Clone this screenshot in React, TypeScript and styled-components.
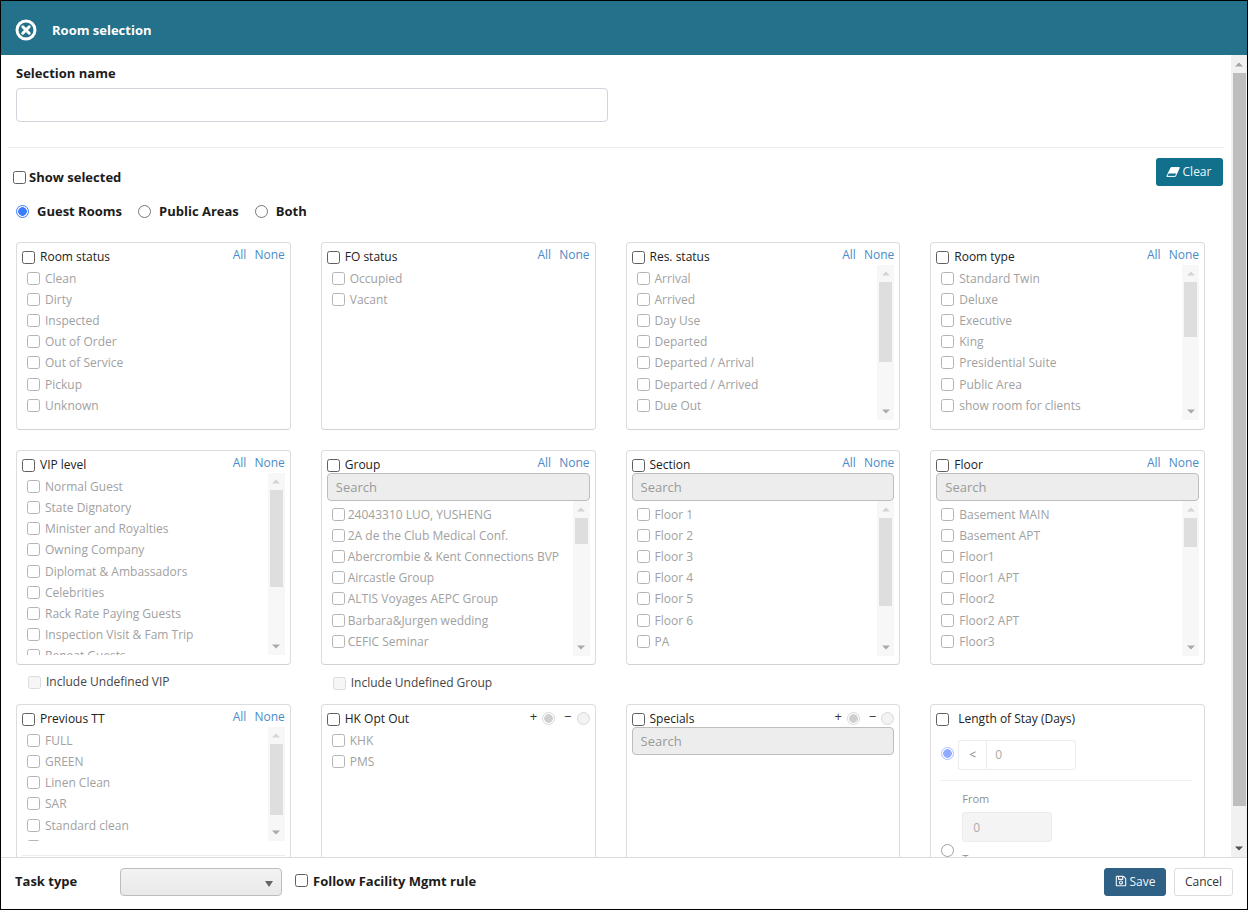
import React from 'react';
import styled, { createGlobalStyle } from 'styled-components';
import { FaRegSave } from 'react-icons/fa';

const GlobalStyle = createGlobalStyle`
  html, body { margin: 0; padding: 0; background: #fff; }
  body { font-family: "Open Sans", "Liberation Sans", sans-serif; font-size: 12px; color: #222; }
  * { box-sizing: border-box; }
`;

const Shell = styled.div`
  width: 1248px;
  height: 910px;
  border: 1px solid #000;
  display: flex;
  flex-direction: column;
  overflow: hidden;
  background: #fff;
`;

const Header = styled.header`
  flex: 0 0 54px;
  background: #23718a;
  display: flex;
  align-items: center;
  padding: 4px 0 0 13px;
  gap: 14px;
  color: #fff;
`;

const HeaderTitle = styled.h1`
  margin: 0;
  font-size: 13px;
  font-weight: 700;
  color: #fff;
`;

const Body = styled.main`
  flex: 1 1 0;
  min-height: 0;
  display: flex;
  overflow: hidden;
`;

const Content = styled.div`
  flex: 1 1 0;
  min-width: 0;
  padding-top: 9px;
  overflow: hidden;
`;

const Rail = styled.div<{ $width: number; $bg: string }>`
  flex: 0 0 ${p => p.$width}px;
  display: flex;
  flex-direction: column;
  background: ${p => p.$bg};
`;

const RailButton = styled.div<{ $size: number }>`
  flex: 0 0 ${p => p.$size}px;
  display: flex;
  align-items: center;
  justify-content: center;
`;

const RailTrack = styled.div`
  flex: 1 1 0;
  min-height: 0;
`;

const RailThumb = styled.div<{ $height: number; $color: string; $left: number; $right: number }>`
  height: ${p => p.$height}px;
  margin: 0 ${p => p.$right}px 0 ${p => p.$left}px;
  background: ${p => p.$color};
`;

const Arrow = ({ up, color }: { up?: boolean; color: string }) => (
  <svg width="8" height="5" viewBox="0 0 8 5" aria-hidden="true">
    <polygon points={up ? '4,0.5 0,4.5 8,4.5' : '0,0.5 8,0.5 4,4.5'} fill={color} />
  </svg>
);

const FieldLabel = styled.label`
  display: block;
  margin-left: 15px;
  font-size: 13px;
  font-weight: 700;
  line-height: 18px;
  color: #1c1c1c;
`;

const NameInput = styled.input`
  display: block;
  margin: 6px 0 0 15px;
  width: 592px;
  height: 34px;
  border: 1px solid #d2d4dc;
  border-radius: 4px;
  background: #fff;
  outline: none;
`;

const Divider = styled.hr`
  margin: 25px 0 0 7px;
  width: 1216px;
  height: 1px;
  border: 0;
  background: #ececec;
`;

const Toolbar = styled.div`
  display: flex;
  justify-content: space-between;
  margin: 10px 8px 0 12px;
  height: 28px;
`;

const ShowSelected = styled.label`
  align-self: flex-end;
  display: flex;
  align-items: center;
  gap: 3px;
  font-size: 13px;
  font-weight: 700;
  line-height: 18px;
  color: #1c1c1c;
`;

const ClearButton = styled.button`
  width: 67px;
  height: 28px;
  border: 0;
  border-radius: 3px;
  background: #11708b;
  color: #f2f7f9;
  font: 400 12px "Open Sans", sans-serif;
  display: flex;
  align-items: center;
  justify-content: center;
  gap: 3px;
  padding: 0 2px 1px 0;
`;

const RadioRow = styled.div`
  display: flex;
  align-items: center;
  height: 18px;
  margin: 16px 0 0 15px;
  gap: 16px;
`;

const RadioLabel = styled.label`
  display: flex;
  align-items: center;
  gap: 8px;
  font-size: 13px;
  font-weight: 700;
  color: #1c1c1c;
`;

const radioTones = {
  main: { border: '#767676', on: '#3b7cff', ring: '#3b7cff', bg: '#fff' },
  soft: { border: '#d8d8d8', on: '#cfcfcf', ring: '#d8d8d8', bg: '#f3f3f3' },
  blue: { border: '#a9c0ff', on: '#8fabff', ring: '#a9c0ff', bg: '#fff' },
  plain: { border: '#a0a0a0', on: '#a0a0a0', ring: '#a0a0a0', bg: '#fff' },
};

const Radio = styled.input.attrs({ type: 'radio' })<{ $tone: keyof typeof radioTones; $lift?: number }>`
  appearance: none;
  flex: none;
  width: 13px;
  height: 13px;
  margin: ${p => (p.$lift ? `-${p.$lift}px 0 0` : '0')};
  border-radius: 50%;
  border: 1px solid ${p => radioTones[p.$tone].border};
  background: ${p => radioTones[p.$tone].bg};
  &:checked {
    border-color: ${p => radioTones[p.$tone].ring};
    background: radial-gradient(circle, ${p => radioTones[p.$tone].on} 0 4px, #fff 4.6px);
  }
`;

const checkTones = {
  strong: { border: '#5f5f5f', bg: '#fff' },
  muted: { border: '#b4b4b4', bg: '#fff' },
  faint: { border: '#dcdcdc', bg: '#f6f6f6' },
};

const Check = styled.input.attrs({ type: 'checkbox' })<{ $tone: keyof typeof checkTones }>`
  appearance: none;
  flex: none;
  width: 13px;
  height: 13px;
  margin: 0;
  border-radius: 2.5px;
  border: 1px solid ${p => checkTones[p.$tone].border};
  background: ${p => checkTones[p.$tone].bg};
`;

const PanelGrid = styled.div`
  display: grid;
  grid-template-columns: repeat(4, 274.75px);
  column-gap: 30px;
  margin: 22px 0 0 15px;
  width: 1189px;
`;

const Cell = styled.div<{ $gap?: number }>`
  margin-bottom: ${p => p.$gap ?? 0}px;
`;

const PanelBox = styled.section<{ $height: number }>`
  height: ${p => p.$height}px;
  border: 1px solid #dcdcdc;
  border-bottom-color: #d2d2d2;
  border-radius: 4px;
  padding: 0 5px;
  overflow: hidden;
`;

const PanelHead = styled.div`
  display: flex;
  align-items: flex-start;
  justify-content: space-between;
  height: 22px;
`;

const PanelTitle = styled.label<{ $gap?: number }>`
  display: flex;
  align-items: center;
  gap: ${p => p.$gap ?? 5}px;
  margin-top: 5px;
  font-size: 12px;
  line-height: 18px;
  color: #222;
`;

const Links = styled.div`
  display: flex;
  gap: 8px;
  margin-top: 4px;
  line-height: 16px;
  font-size: 12px;
`;

const LinkAction = styled.a`
  color: #4a8cc7;
`;

const Polarity = styled.div`
  display: flex;
  align-items: center;
  margin-top: 5px;
  height: 16px;
  font-size: 13px;
  color: #333;
`;

const PolaritySign = styled.span<{ $lead?: boolean }>`
  margin: -4px 5px 0 ${p => (p.$lead ? 9 : 0)}px;
  line-height: 16px;
`;

const SearchBox = styled.input`
  display: block;
  width: 100%;
  height: 28px;
  padding: 0 8px;
  border: 1px solid #bdbdbd;
  border-radius: 4px;
  background: #ededed;
  font: 400 13px "Open Sans", sans-serif;
  outline: none;
  &::placeholder { color: #9a9a9a; opacity: 1; }
`;

const List = styled.div<{ $height: number }>`
  display: flex;
  height: ${p => p.$height}px;
  overflow: hidden;
`;

const ListInner = styled.div<{ $top: number }>`
  flex: 1 1 0;
  min-width: 0;
  overflow: hidden;
  padding: ${p => p.$top}px 0 0 5px;
`;

const Item = styled.label<{ $gap: number }>`
  display: flex;
  align-items: center;
  gap: ${p => p.$gap}px;
  height: 21.14px;
  font-size: 12px;
  color: #a1a1a1;
  white-space: nowrap;
`;

const IncludeRow = styled.label<{ $bottom: number }>`
  display: flex;
  align-items: center;
  gap: 5px;
  height: 39px;
  padding: 0 0 ${p => p.$bottom}px 12px;
  font-size: 12px;
  line-height: 18px;
  color: #444;
`;

const PanelRule = styled.hr`
  margin: 14px 0 0;
  height: 1px;
  border: 0;
  background: #ececec;
`;

const StayRow = styled.div`
  display: flex;
  align-items: center;
  gap: 4px;
  margin-top: 13px;
  padding-left: 5px;
`;

const Addon = styled.span`
  width: 28px;
  height: 30px;
  padding-bottom: 1px;
  border: 1px solid #ececec;
  border-right: 0;
  border-radius: 3px 0 0 3px;
  display: flex;
  align-items: center;
  justify-content: center;
  font-size: 12px;
  color: #888;
`;

const AddonGroup = styled.div`
  display: flex;
`;

const StayInput = styled.input<{ $filled?: boolean }>`
  display: block;
  width: 90px;
  height: 30px;
  padding: 0 ${p => (p.$filled ? 10 : 8)}px ${p => (p.$filled ? 0 : 2)}px;
  border: 1px solid #ececec;
  border-radius: ${p => (p.$filled ? '3px' : '0 3px 3px 0')};
  background: ${p => (p.$filled ? '#f4f4f4' : '#fff')};
  font: 400 12px "Open Sans", sans-serif;
  color: #aaa;
  outline: none;
`;

const StayRule = styled.hr`
  margin: 10px 6px 0 4px;
  height: 1px;
  border: 0;
  background: #f0f0f0;
`;

const RangeRow = styled.div`
  display: flex;
  align-items: flex-start;
  gap: 8px;
  margin-top: 9px;
  padding-left: 5px;
`;

const RangeRadio = styled.div`
  margin-top: 54px;
  line-height: 0;
`;

const RangeColumn = styled.div`
  display: flex;
  flex-direction: column;
`;

const RangeLabel = styled.span<{ $top?: number }>`
  margin-top: ${p => p.$top ?? 0}px;
  margin-bottom: ${p => (p.$top ? 0 : 4)}px;
  font-size: 11px;
  line-height: 18px;
  color: #8f8f8f;
`;

const Footer = styled.footer`
  flex: 0 0 52px;
  border-top: 1px solid #dcdcdc;
  display: flex;
  align-items: center;
  padding: 0 14px 3px;
`;

const FooterLabel = styled.span`
  width: 105px;
  margin-top: -3px;
  font-size: 13px;
  font-weight: 700;
  color: #1c1c1c;
`;

const SelectBox = styled.div`
  position: relative;
  width: 162px;
  height: 28px;
  border: 1px solid #bdbdbd;
  border-radius: 4px;
  background: linear-gradient(#f3f3f3, #e9e9e9);
`;

const SelectCaret = styled.span`
  position: absolute;
  right: 8px;
  top: 12px;
  width: 0;
  height: 0;
  border-left: 4px solid transparent;
  border-right: 4px solid transparent;
  border-top: 6px solid #666;
`;

const FollowRule = styled.label`
  display: flex;
  align-items: center;
  gap: 5px;
  margin: -3px 0 0 13px;
  font-size: 13px;
  font-weight: 700;
  color: #1c1c1c;
`;

const FooterActions = styled.div`
  display: flex;
  gap: 8px;
  margin-left: auto;
`;

const ActionButton = styled.button<{ $primary?: boolean }>`
  height: 28px;
  width: ${p => (p.$primary ? 62 : 59)}px;
  padding: 0 0 2px;
  border: 1px solid ${p => (p.$primary ? '#2f6186' : '#dcdcdc')};
  border-radius: 3px;
  background: ${p => (p.$primary ? '#2f6186' : '#fff')};
  color: ${p => (p.$primary ? '#f0f4f7' : '#333')};
  font: 400 12px "Open Sans", sans-serif;
  display: flex;
  align-items: center;
  justify-content: center;
  gap: 3px;
`;

type PanelSpec = {
  title: string;
  items: string[];
  height: number;
  listHeight: number;
  thumb?: number;
  search?: boolean;
  polarity?: boolean;
  itemGap?: number;
  itemTop?: number;
  rule?: boolean;
};

const CloseIcon = () => (
  <svg width="24" height="24" viewBox="0 0 24 24" aria-hidden="true">
    <circle cx="12" cy="12" r="9" fill="none" stroke="#fff" strokeWidth="3" />
    <path d="M8.8 8.8 15.2 15.2 M15.2 8.8 8.8 15.2" stroke="#fff" strokeWidth="3" strokeLinecap="round" />
  </svg>
);

const EraserIcon = () => (
  <svg width="14" height="10" viewBox="0 0 14 10" aria-hidden="true">
    <path d="M5 .6H13.4L9.4 9.4H.8Z" fill="none" stroke="#fff" strokeWidth="1" />
    <path d="M5 .6H13.4L10.8 6.4H2.4Z" fill="#fff" />
  </svg>
);

const ListRail = ({ thumb }: { thumb: number }) => (
  <Rail $width={17} $bg="#f7f7f7">
    <RailButton $size={17}>
      <Arrow up color="#d4d4d4" />
    </RailButton>
    <RailTrack>
      <RailThumb $height={thumb} $color="#dedede" $left={2} $right={2} />
    </RailTrack>
    <RailButton $size={17}>
      <Arrow color="#aaaaaa" />
    </RailButton>
  </Rail>
);

const Panel = ({ spec }: { spec: PanelSpec }) => (
  <PanelBox $height={spec.height}>
    <PanelHead>
      <PanelTitle>
        <Check $tone="strong" />
        {spec.title}
      </PanelTitle>
      {spec.polarity ? (
        <Polarity>
          <PolaritySign>+</PolaritySign>
          <Radio $tone="soft" name={`${spec.title}-p`} defaultChecked />
          <PolaritySign $lead>−</PolaritySign>
          <Radio $tone="soft" name={`${spec.title}-p`} />
        </Polarity>
      ) : (
        <Links>
          <LinkAction>All</LinkAction>
          <LinkAction>None</LinkAction>
        </Links>
      )}
    </PanelHead>
    {spec.search && <SearchBox placeholder="Search" />}
    <List $height={spec.listHeight}>
      <ListInner $top={spec.itemTop ?? 2.82}>
        {spec.items.map(item => (
          <Item key={item} $gap={spec.itemGap ?? 5}>
            <Check $tone="muted" />
            {item}
          </Item>
        ))}
      </ListInner>
      {spec.thumb && <ListRail thumb={spec.thumb} />}
    </List>
    {spec.rule && <PanelRule />}
  </PanelBox>
);

const firstRow: PanelSpec[] = [
  { title: 'Room status', height: 188, listHeight: 155, items: ['Clean', 'Dirty', 'Inspected', 'Out of Order', 'Out of Service', 'Pickup', 'Unknown'] },
  { title: 'FO status', height: 188, listHeight: 155, items: ['Occupied', 'Vacant'] },
  { title: 'Res. status', height: 188, listHeight: 155, thumb: 80, items: ['Arrival', 'Arrived', 'Day Use', 'Departed', 'Departed / Arrival', 'Departed / Arrived', 'Due Out'] },
  { title: 'Room type', height: 188, listHeight: 155, thumb: 55, items: ['Standard Twin', 'Deluxe', 'Executive', 'King', 'Presidential Suite', 'Public Area', 'show room for clients'] },
];

const secondRow: PanelSpec[] = [
  { title: 'VIP level', height: 215, listHeight: 182, thumb: 97, itemTop: 3.05, items: ['Normal Guest', 'State Dignatory', 'Minister and Royalties', 'Owning Company', 'Diplomat & Ambassadors', 'Celebrities', 'Rack Rate Paying Guests', 'Inspection Visit & Fam Trip', 'Repeat Guests'] },
  { title: 'Group', height: 215, listHeight: 155, thumb: 26, search: true, itemGap: 3, items: ['24043310 LUO, YUSHENG', '2A de the Club Medical Conf.', 'Abercrombie & Kent Connections BVP', 'Aircastle Group', 'ALTIS Voyages AEPC Group', 'Barbara&Jurgen wedding', 'CEFIC Seminar'] },
  { title: 'Section', height: 215, listHeight: 155, thumb: 88, search: true, items: ['Floor 1', 'Floor 2', 'Floor 3', 'Floor 4', 'Floor 5', 'Floor 6', 'PA'] },
  { title: 'Floor', height: 215, listHeight: 155, thumb: 29, search: true, items: ['Basement MAIN', 'Basement APT', 'Floor1', 'Floor1 APT', 'Floor2', 'Floor2 APT', 'Floor3'] },
];

const thirdRow: PanelSpec[] = [
  { title: 'Previous TT', height: 189, listHeight: 114, thumb: 71, itemTop: 3.05, rule: true, items: ['FULL', 'GREEN', 'Linen Clean', 'SAR', 'Standard clean', 'Turn down'] },
  { title: 'HK Opt Out', height: 189, listHeight: 155, polarity: true, itemTop: 3.05, items: ['KHK', 'PMS'] },
  { title: 'Specials', height: 189, listHeight: 100, polarity: true, search: true, items: [] },
];

export default function App() {
  return (
    <>
      <GlobalStyle />
      <Shell>
        <Header>
          <CloseIcon />
          <HeaderTitle>Room selection</HeaderTitle>
        </Header>
        <Body>
          <Content>
            <FieldLabel>Selection name</FieldLabel>
            <NameInput />
            <Divider />
            <Toolbar>
              <ShowSelected>
                <Check $tone="strong" />
                Show selected
              </ShowSelected>
              <ClearButton>
                <EraserIcon />
                Clear
              </ClearButton>
            </Toolbar>
            <RadioRow>
              <RadioLabel>
                <Radio $tone="main" name="scope" defaultChecked />
                Guest Rooms
              </RadioLabel>
              <RadioLabel>
                <Radio $tone="main" name="scope" />
                Public Areas
              </RadioLabel>
              <RadioLabel>
                <Radio $tone="main" name="scope" />
                Both
              </RadioLabel>
            </RadioRow>
            <PanelGrid>
              {firstRow.map(spec => (
                <Cell key={spec.title} $gap={20}>
                  <Panel spec={spec} />
                </Cell>
              ))}
              {secondRow.map(spec => (
                <Cell key={spec.title}>
                  <Panel spec={spec} />
                  {spec.title === 'VIP level' && (
                    <IncludeRow $bottom={5}>
                      <Check $tone="faint" />
                      Include Undefined VIP
                    </IncludeRow>
                  )}
                  {spec.title === 'Group' && (
                    <IncludeRow $bottom={3}>
                      <Check $tone="faint" />
                      Include Undefined Group
                    </IncludeRow>
                  )}
                  {spec.title !== 'VIP level' && spec.title !== 'Group' && <IncludeRow $bottom={0} />}
                </Cell>
              ))}
              {thirdRow.map(spec => (
                <Cell key={spec.title}>
                  <Panel spec={spec} />
                </Cell>
              ))}
              <Cell>
                <PanelBox $height={189}>
                  <PanelHead>
                    <PanelTitle $gap={9}>
                      <Check $tone="strong" />
                      Length of Stay (Days)
                    </PanelTitle>
                  </PanelHead>
                  <StayRow>
                    <Radio $tone="blue" $lift={4} name="stay" defaultChecked />
                    <AddonGroup>
                      <Addon>&lt;</Addon>
                      <StayInput defaultValue="0" />
                    </AddonGroup>
                  </StayRow>
                  <StayRule />
                  <RangeRow>
                    <RangeRadio>
                      <Radio $tone="plain" name="stay" />
                    </RangeRadio>
                    <RangeColumn>
                      <RangeLabel>From</RangeLabel>
                      <StayInput $filled defaultValue="0" />
                      <RangeLabel $top={8}>To</RangeLabel>
                    </RangeColumn>
                  </RangeRow>
                </PanelBox>
              </Cell>
            </PanelGrid>
          </Content>
          <Rail $width={16} $bg="#f1f1f1">
            <RailButton $size={18}>
              <Arrow up color="#a3a3a3" />
            </RailButton>
            <RailTrack>
              <RailThumb $height={733} $color="#bebebe" $left={2} $right={1} />
            </RailTrack>
            <RailButton $size={18}>
              <Arrow color="#505050" />
            </RailButton>
          </Rail>
        </Body>
        <Footer>
          <FooterLabel>Task type</FooterLabel>
          <SelectBox>
            <SelectCaret />
          </SelectBox>
          <FollowRule>
            <Check $tone="strong" />
            Follow Facility Mgmt rule
          </FollowRule>
          <FooterActions>
            <ActionButton $primary>
              <FaRegSave size={12} />
              Save
            </ActionButton>
            <ActionButton>Cancel</ActionButton>
          </FooterActions>
        </Footer>
      </Shell>
    </>
  );
}
